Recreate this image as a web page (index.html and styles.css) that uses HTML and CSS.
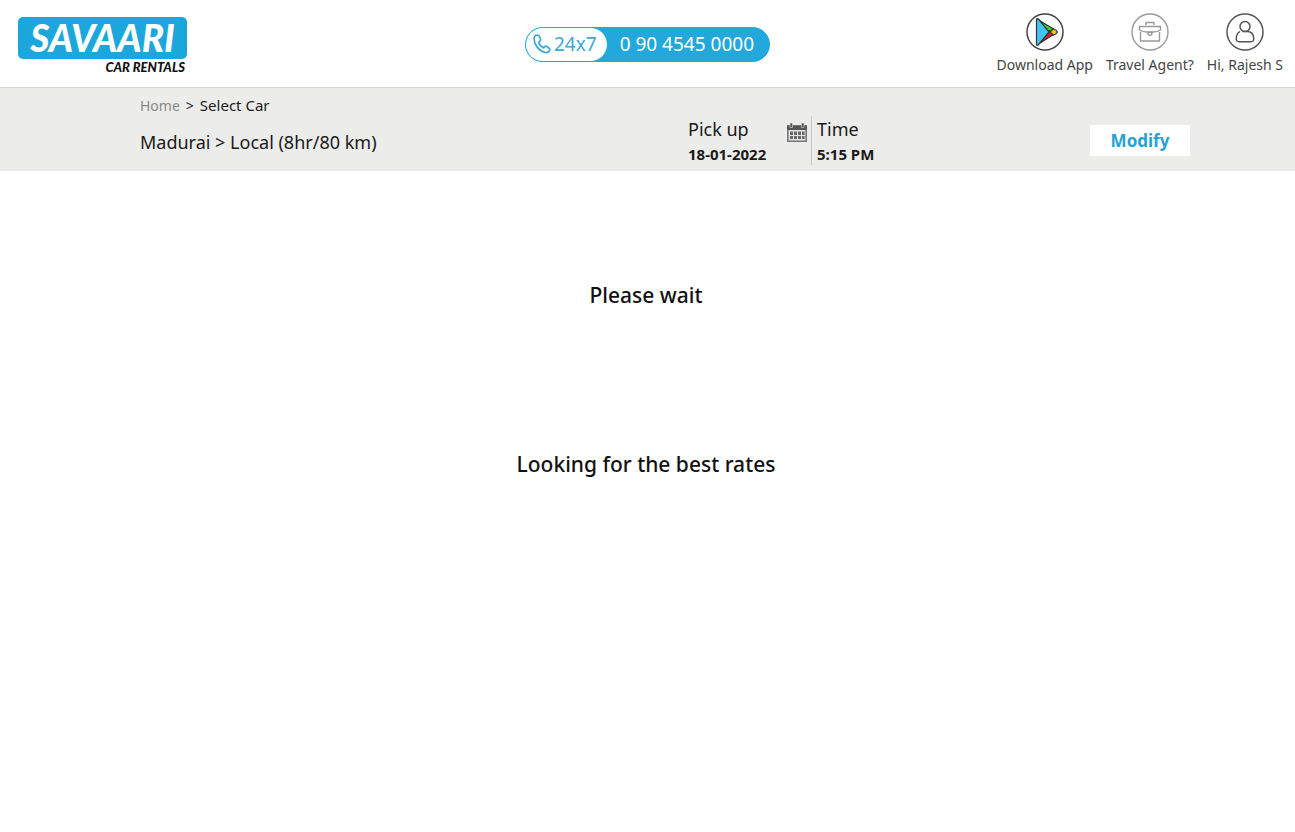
FILE: index.html
```html
<!DOCTYPE html>
<html lang="en">
<head>
<meta charset="utf-8">
<meta name="viewport" content="width=device-width, initial-scale=1">
<title>Savaari Car Rentals - Select Car</title>
<link rel="stylesheet" href="styles.css">
</head>
<body>
<header class="header">
  <a class="logo" href="#">
    <span class="logo-name">SAVAARI</span>
    <span class="logo-tag">CAR RENTALS</span>
  </a>
  <a class="phone" href="tel:09045450000">
    <span class="phone-hours">
      <svg width="18" height="20" viewBox="0 0 18 20" fill="none" stroke="currentColor" stroke-width="1.700" stroke-linejoin="round"><path d="M4.300 1.200C2 1.300 1 3 1 5c.2 6 5.500 12.500 11.500 13.500 1.800.3 3.600-.6 4.200-2.300.3-.8 0-1.500-.6-2l-2.400-1.700c-.6-.5-1.400-.4-2 .1l-1.200 1.200c-2.300-1-4-3.100-4.800-5.500L7.100 7c.5-.5.600-1.200.4-1.800L6.400 2.400c-.4-.8-1.200-1.300-2.100-1.200z"/></svg>
      24x7
    </span>
    <span class="phone-number">0 90 4545 0000</span>
  </a>
  <nav class="links">
    <a class="link" href="#">
      <svg width="38" height="38" viewBox="0 0 38 38"><circle cx="19" cy="19" r="18" fill="#fff" stroke="#444" stroke-width="1.500"/><g stroke="#333" stroke-width="1.200" stroke-linejoin="round"><path d="M11 6l16.500 10-4 4z" fill="#39d52c"/><path d="M11 32l16.500-10.500-4-4z" fill="#d8232e"/><path d="M10.500 6.500v25c.5 1 1.500 1 2 .2L23 19 12.500 6c-.8-.7-1.600-.5-2 .5z" fill="#41c5f8"/><path d="M24 19l3.500-3.200c1.500.6 3.200 1.700 4 3.200-.8 1.500-2.500 2.600-4 3.200z" fill="#fbc312"/></g></svg>
      Download App
    </a>
    <a class="link" href="#">
      <svg width="38" height="38" viewBox="0 0 38 38" fill="none" stroke="#999" stroke-width="1.400" stroke-linejoin="round"><circle cx="19" cy="19" r="18"/><path d="M15 12v-2.500h8V12M8.500 13.500h21V17c-2 1.500-4 2-7.500 2h-6c-3.500 0-5.500-.5-7.500-2zM9.500 19v9h19v-9"/><path d="M17 19.500h4V21c0 .8-1 1.300-2 1.300s-2-.5-2-1.300z"/></svg>
      Travel Agent?
    </a>
    <a class="link" href="#">
      <svg width="38" height="38" viewBox="0 0 38 38" fill="none" stroke="#555" stroke-width="1.500" stroke-linecap="round"><circle cx="19" cy="19" r="18"/><circle cx="19" cy="13.500" r="5"/><path d="M13.500 18.800c-2 1-3 3.200-3.200 6.200-.2 2.800.7 3.700 2.700 3.700h12c2 0 2.900-.9 2.700-3.700-.3-4-2.700-6.500-6.700-6.500h-4"/></svg>
      Hi, Rajesh S
    </a>
  </nav>
</header>
<section class="trip">
  <div class="route">
    <nav class="crumbs"><a class="crumb-home" href="#">Home</a><span class="crumb-sep">&gt;</span><span class="crumb-here">Select Car</span></nav>
    <h1 class="route-name">Madurai &gt; Local (8hr/80 km)</h1>
  </div>
  <dl class="pickup">
    <div class="date">
      <dt class="term">Pick up</dt>
      <dd class="value">18-01-2022</dd>
    </div>
    <svg class="calendar" width="20" height="19" viewBox="0 0 20 19"><path d="M.8 3h18.400v15.200H.8z" fill="#e4e4e4" stroke="#777" stroke-width="1.600"/><path d="M0 2.500h20V7H0z" fill="#555"/><path d="M3 0h2.500v4.500H3zM14.500 0H17v4.500h-2.500z" fill="#555" stroke="#ddd" stroke-width=".6"/><path d="M3 8.500h3V12H3zM7 8.500h3V12H7zM11 8.500h3V12h-3zM15 8.500h2.500V12H15zM3 13h3v3H3zM7 13h3v3H7zM11 13h3v3h-3zM15 13h2.500v3H15z" fill="#666"/></svg>
    <div class="time">
      <dt class="term">Time</dt>
      <dd class="value">5:15 PM</dd>
    </div>
  </dl>
  <button class="modify" type="button">Modify</button>
</section>
<main class="loading" role="status">
  <p class="message">Please wait</p>
  <p class="message">Looking for the best rates</p>
</main>
</body>
</html>
```
FILE: styles.css
```css
* { box-sizing: border-box; }

body {
  margin: 0;
  background: #fff;
  color: #1a1a1a;
  font-family: "Noto Sans", "Open Sans", sans-serif;
}

a { color: inherit; text-decoration: none; }

.header {
  display: grid;
  grid-template-columns: 1fr auto 1fr;
  align-items: center;
  height: 88px;
  padding: 1px 12px 0;
  border-bottom: 1px solid #d8d8d8;
}

.logo {
  display: flex;
  flex-direction: column;
  align-items: flex-end;
  justify-self: start;
  padding: 4px 0 0 6px;
  font-family: Lato, sans-serif;
  font-style: italic;
  font-weight: 900;
}

.logo-name {
  width: 169px;
  height: 42px;
  border-radius: 5px;
  background: #1ba6dc;
  color: #fff;
  font-size: 37px;
  line-height: 42px;
  text-align: center;
}

.logo-tag {
  padding-right: 2px;
  color: #111;
  font-size: 13px;
  line-height: 16px;
}

.phone {
  display: flex;
  align-items: center;
  height: 35px;
  border: 1px solid #22a8da;
  border-radius: 18px;
  background: #22a8da;
  color: #fff;
  font-size: 19px;
}

.phone-hours {
  display: flex;
  align-items: center;
  gap: 3px;
  height: 33px;
  padding: 0 10px 0 7px;
  border-radius: 17px;
  background: #fff;
  color: #3ba9d6;
}

.phone-number { padding: 0 15px 0 13px; }

.links {
  display: flex;
  justify-self: end;
  gap: 13px;
}

.link {
  display: flex;
  flex-direction: column;
  align-items: center;
  gap: 4px;
  color: #444;
  font-size: 14px;
  line-height: 20px;
}

.trip {
  display: grid;
  grid-template-columns: 548px 1fr auto;
  padding: 8px 105px 6px 140px;
  background: #ececea;
}

.crumbs {
  display: flex;
  align-items: baseline;
  gap: 6px;
  font-size: 14px;
  line-height: 18px;
}

.crumb-home { color: #888; }

.crumb-here { font-size: 15px; }

.route-name {
  margin: 16px 0 0;
  font-size: 18px;
  font-weight: 400;
  line-height: 22px;
}

.pickup {
  display: flex;
  margin: 20px 0 0;
}

.date { width: 99px; }

.term {
  font-size: 18px;
  line-height: 27px;
}

.value {
  margin: 0;
  font-size: 15px;
  font-weight: 700;
  line-height: 22px;
}

.calendar { margin: 7px 4px 0 0; }

.time {
  padding-left: 5px;
  border-left: 1px solid #c8c8c8;
}

.modify {
  align-self: start;
  width: 100px;
  height: 31px;
  margin-top: 29px;
  padding: 1px 0 0;
  border: 0;
  background: #fff;
  color: #22a3d3;
  font: 700 17px/30px "Noto Sans", sans-serif;
}

.loading {
  display: flex;
  flex-direction: column;
  gap: 139px;
  padding: 109px 3px 0 0;
  text-align: center;
}

.message {
  margin: 0;
  color: #111;
  font-size: 21px;
  font-weight: 500;
  line-height: 30px;
}
```
